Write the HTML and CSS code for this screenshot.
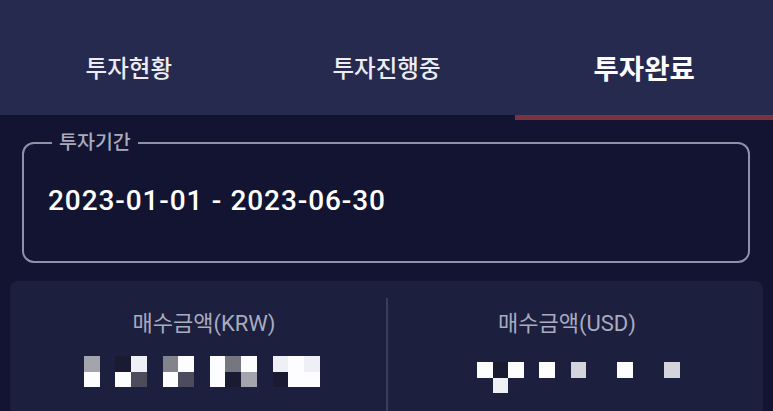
FILE: index.html
```html
<!DOCTYPE html>
<html lang="ko">
<head>
<meta charset="utf-8">
<title>투자완료</title>
<link rel="stylesheet" href="styles.css">
</head>
<body>
<nav class="tabs">
  <div class="tab">투자현황</div>
  <div class="tab">투자진행중</div>
  <div class="tab active">투자완료</div>
</nav>
<main class="content">
  <fieldset class="period">
    <legend>투자기간</legend>
    <div class="dates">2023-01-01 - 2023-06-30</div>
  </fieldset>
  <section class="card">
    <div class="col col-left">
      <div class="label">매수금액(KRW)</div>
      <div class="pix pix-krw">
        <i class="c1"></i><i></i><i class="cd"></i><i class="c9"></i><i></i><i class="c5"></i><i class="cw"></i><i></i><i class="cw"></i><i class="c4"></i><i class="cw"></i><i></i><i class="c9"></i><i class="cw"></i><i class="c9"></i>
        <i class="cw"></i><i></i><i class="cw"></i><i class="c3"></i><i></i><i class="cw"></i><i class="c3"></i><i></i><i class="cw"></i><i class="cd"></i><i class="c1"></i><i></i><i class="cd"></i><i class="cw"></i><i class="cw"></i>
      </div>
    </div>
    <div class="divider"></div>
    <div class="col col-right">
      <div class="label">매수금액(USD)</div>
      <div class="pix pix-usd">
        <i class="cw"></i><i class="cd"></i><i class="cw"></i><i></i><i class="cw"></i><i></i><i class="c8"></i><i></i><i></i><i class="cw"></i><i></i><i></i><i class="c8"></i>
        <i></i><i class="c9"></i><i></i><i></i><i></i><i></i><i></i><i></i><i></i><i></i><i></i><i></i><i></i>
      </div>
    </div>
  </section>
</main>
</body>
</html>
```

FILE: styles.css
```css
* { box-sizing: border-box; }

html, body {
  margin: 0;
  padding: 0;
  background: #121432;
  height: 100%;
  overflow: hidden;
}

body {
  font-family: Roboto, "Noto Sans CJK KR", sans-serif;
  color: #ffffff;
}

.tabs {
  display: grid;
  grid-template-columns: repeat(3, 1fr);
}

.tab {
  height: 120px;
  background: #262a4f;
  background-clip: padding-box;
  border-bottom: 5px solid transparent;
  display: flex;
  align-items: center;
  justify-content: center;
  padding-top: 18px;
  font-size: 23.5px;
  font-weight: 500;
  color: #ececf2;
}

.tab.active {
  border-bottom-color: #7a3440;
  font-size: 27.5px;
  font-weight: 700;
  color: #ffffff;
}

.content {
  padding: 12px 10px 0 10px;
}

.period {
  margin: 0 13px 0 12px;
  padding: 30px 24px 43px 24px;
  border: 2px solid #8f91a8;
  border-radius: 12px;
  min-width: 0;
}

.period legend {
  margin-left: 4px;
  padding: 0 7px 0 7px;
  font-size: 19.5px;
  font-weight: 500;
  line-height: 22px;
  color: #a9abbd;
}

.dates {
  font-size: 28px;
  font-weight: 500;
  line-height: 34px;
  letter-spacing: 0.9px;
  word-spacing: 0.5px;
  color: #ffffff;
}

.card {
  margin-top: 18px;
  width: 753px;
  height: 150px;
  background: #1d1f3e;
  border-radius: 8px;
  padding-top: 17px;
  display: flex;
}

.col {
  display: flex;
  flex-direction: column;
  padding-top: 13px;
}

.col-left {
  flex: none;
  width: 376px;
  padding-left: 12px;
}

.col-right {
  flex: 1;
  padding-right: 17px;
}

.label {
  text-align: center;
  font-size: 22px;
  line-height: 26px;
  color: #a9abbf;
}

.divider {
  width: 2px;
  background: #3a3d5e;
  flex: none;
}

.pix {
  display: grid;
  grid-auto-rows: 15.7px;
}

.pix i {
  display: block;
}

.pix-krw {
  grid-template-columns: repeat(15, 15.73px);
  margin-top: 19px;
  margin-left: 62px;
}

.pix-usd {
  grid-template-columns: repeat(13, 15.6px);
  margin-top: 25px;
  margin-left: 89px;
}

.cw { background: #fdfdff; }
.c9 { background: #eff0f5; }
.c8 { background: #d4d4dc; }
.c1 { background: #a4a4ae; }
.c5 { background: #83838e; }
.c4 { background: #767680; }
.c3 { background: #4c4c5c; }
.cd { background: #1a1b32; }
```
